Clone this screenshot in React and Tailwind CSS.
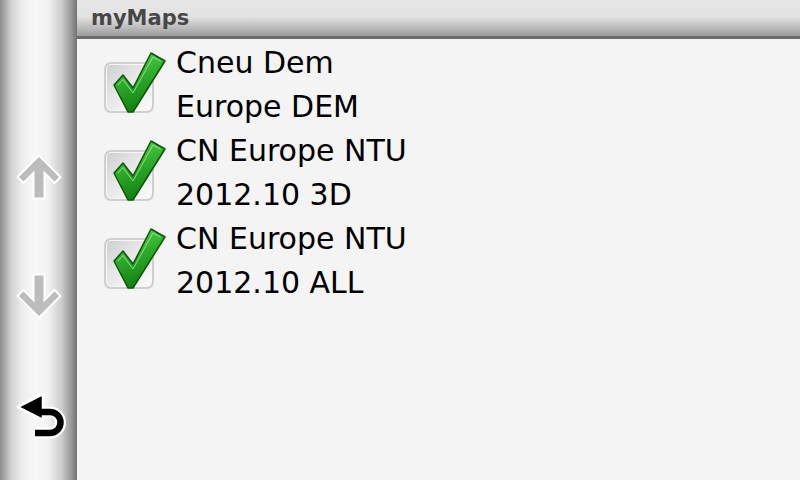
import React from 'react'

const MAPS = [
  ['Cneu Dem', 'Europe DEM'],
  ['CN Europe NTU', '2012.10 3D'],
  ['CN Europe NTU', '2012.10 ALL'],
]

function ArrowIcon({ down }) {
  return (
    <svg width="46" height="46" viewBox="0 0 46 46" className={down ? 'rotate-180' : ''}>
      <path
        d="M23 1.5 L44.5 23 L38.5 29 L28.5 19 L28.5 44.5 L17.5 44.5 L17.5 19 L7.5 29 L1.5 23 Z"
        fill="#bcbcbc"
        stroke="#ffffff"
        strokeWidth="2"
      />
    </svg>
  )
}

function BackIcon() {
  return (
    <svg width="54" height="54" viewBox="0 0 54 54">
      <path d="M25 22 L37 22 A10.5 10.5 0 0 1 37 43 L22 43" fill="none" stroke="#ffffff" strokeWidth="11" />
      <path d="M5 17 L30 4 L30 30 Z" fill="#000" stroke="#ffffff" strokeWidth="3" strokeLinejoin="round" />
      <path d="M25 22 L37 22 A10.5 10.5 0 0 1 37 43 L22 43" fill="none" stroke="#000" strokeWidth="6.5" />
      <path d="M7.5 17 L28.5 6.5 L28.5 27.5 Z" fill="#000" />
    </svg>
  )
}

function CheckBox() {
  return (
    <div className="relative mt-[21px] h-[51px] w-[50px] shrink-0 rounded-[7px] border-2 border-[#cfcfcf] bg-[linear-gradient(135deg,#cfcfcf_0%,#e8e8e8_45%,#fbfbfb_100%)] shadow-[inset_0_0_0_1px_#f6f6f6]">
      <svg className="absolute left-[-6px] top-[-16px]" width="68" height="68" viewBox="0 0 68 68">
        <defs>
          <linearGradient id="ck" x1="0" y1="0" x2="0.3" y2="1">
            <stop offset="0" stopColor="#64d655" />
            <stop offset="0.5" stopColor="#2fae2a" />
            <stop offset="1" stopColor="#137f13" />
          </linearGradient>
        </defs>
        <path
          d="M14 37 L23 27 L33 40 L51 5 L65 13 L33 64 L28 64 Z"
          fill="url(#ck)"
          stroke="#0b550b"
          strokeWidth="1.5"
          strokeLinejoin="round"
        />
        <path d="M18 37 L23 31.5 L33 45 L53 9 L60.5 13" fill="none" stroke="#a5ec97" strokeWidth="1" opacity="0.8" />
      </svg>
    </div>
  )
}

export default function App() {
  return (
    <div className="flex h-[480px] w-[800px] overflow-hidden bg-[#f4f4f4] font-['DejaVu_Sans',sans-serif]">
      <div className="flex w-[77px] shrink-0 flex-col items-center bg-[linear-gradient(to_right,#8c8c8c_0%,#cfcfcf_14%,#ececec_28%,#f8f8f8_45%,#f2f2f2_62%,#cdcdcd_80%,#9a9a9a_92%,#727272_100%)] pt-[154px]">
        <ArrowIcon />
        <div className="mt-[73px]">
          <ArrowIcon down />
        </div>
        <div className="ml-[13px] mt-[71px] self-start">
          <BackIcon />
        </div>
      </div>
      <div className="flex flex-1 flex-col">
        <div className="flex h-[39px] items-center border-b-[3px] border-[#6c6c6c] bg-[linear-gradient(to_bottom,#e6e6e6_0%,#e3e3e3_45%,#c4c4c4_70%,#9c9c9c_100%)] pl-[14px]">
          <span className="text-[21px] font-bold leading-none text-[#474747]">myMaps</span>
        </div>
        <div className="flex flex-col pl-[27px] pt-[2px]">
          {MAPS.map((m, i) => (
            <div key={i} className="flex h-[88px] gap-[22px]">
              <CheckBox />
              <div className="text-[30px] leading-[44px] text-black">
                <div>{m[0]}</div>
                <div>{m[1]}</div>
              </div>
            </div>
          ))}
        </div>
      </div>
    </div>
  )
}
